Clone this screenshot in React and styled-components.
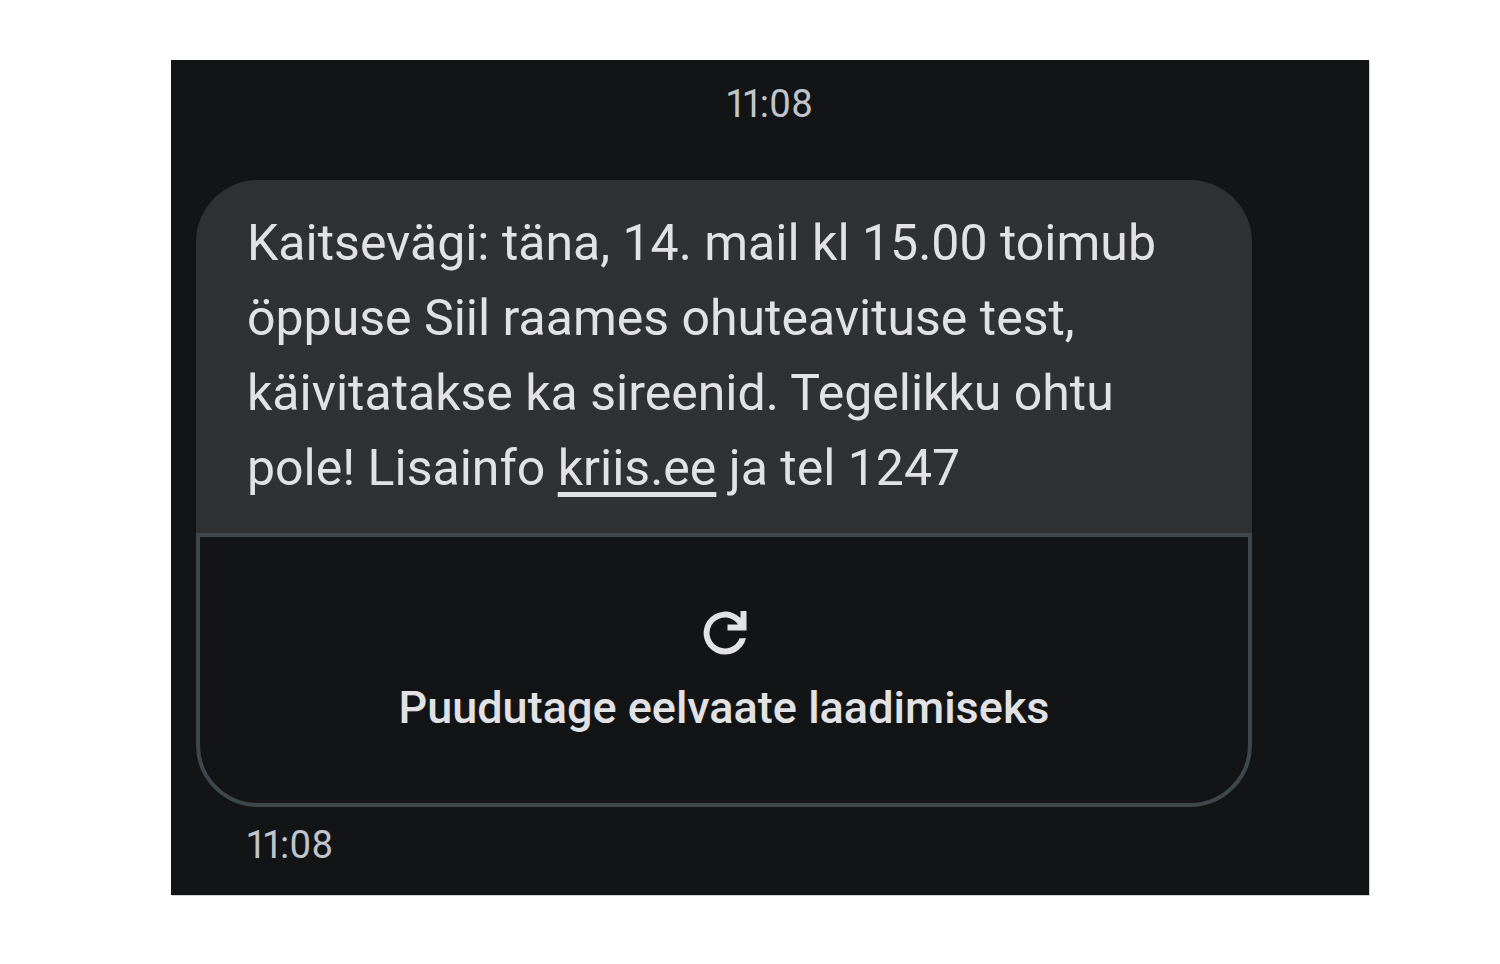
import React from 'react';
import styled, { createGlobalStyle } from 'styled-components';

const GlobalStyle = createGlobalStyle`
    body {
        margin: 0;
        background: #fff;
        font-family: Roboto, "Open Sans", sans-serif;
    }
`;
const Page = styled.main`
    padding: 60px 131px 69px 171px;
`;
const Chat = styled.section`
    display: flex;
    flex-direction: column;
    background: #131416;
    box-shadow: 1px 1px 0 #d2d3d4;
    padding: 20px 0 26px;
`;
const Time = styled.time`
    align-self: ${props => props.$center ? 'center' : 'flex-start'};
    margin-left: ${props => props.$center ? '0' : '76px'};
    font-size: 38px;
    font-variant-numeric: proportional-nums;
    line-height: 48px;
    color: #bfc5cb;
`;
const Message = styled.article`
    margin: 52px 117px 14px 25px;
`;
const Bubble = styled.p`
    margin: 0;
    padding: 26px 51px 27px;
    border-radius: 62px 62px 0 0;
    background: #303133;
    color: #e2e2e5;
    font-size: 50px;
    line-height: 75px;
`;
const Link = styled.a`
    color: inherit;
    text-decoration: underline;
    text-decoration-thickness: 5px;
    text-underline-offset: 7px;
    text-decoration-skip-ink: none;
`;
const Preview = styled.button`
    display: flex;
    flex-direction: column;
    align-items: center;
    gap: 24px;
    width: 100%;
    padding: 72px 24px 68px;
    border: 4px solid #3e484b;
    border-radius: 0 0 62px 62px;
    background: transparent;
    color: #e2e2e5;
    font-family: inherit;
    font-size: 45px;
    font-weight: 500;
    line-height: 54px;
    cursor: pointer;
`;

const ReloadIcon = () => (
    <svg width="48" height="48" viewBox="0 0 48 48" fill="currentColor" aria-hidden="true">
        <path d="M46 29.2A21.5 21.5 0 1 1 40.5 9.1V2H46.5V21.5H27.5V15.5H38A15.5 15.5 0 1 0 39.6 29.2Z" />
    </svg>
);

const App = () => {
    const hora = '11:08';

    return ( <>
        <GlobalStyle />
        <Page>
            <Chat>
                <Time $center>{hora}</Time>
                <Message>
                    <Bubble>
                        Kaitsevägi: täna, 14. mail kl 15.00 toimub
                        öppuse Siil raames ohuteavituse test,
                        käivitatakse ka sireenid. Tegelikku ohtu
                        pole! Lisainfo <Link href="#kriis">kriis.ee</Link> ja tel 1247
                    </Bubble>
                    <Preview type="button">
                        <ReloadIcon />
                        Puudutage eelvaate laadimiseks
                    </Preview>
                </Message>
                <Time>{hora}</Time>
            </Chat>
        </Page>
        </>
    );
}

export default App;
